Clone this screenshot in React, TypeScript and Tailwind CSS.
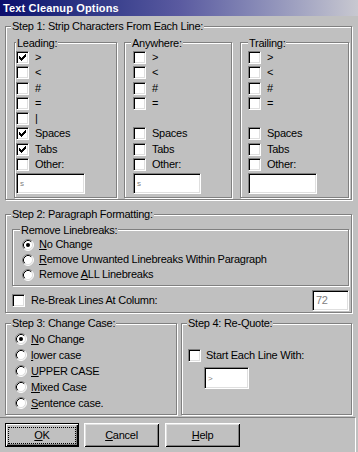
import React from 'react'

type Kids = { children?: React.ReactNode }

const sunken =
  'border border-t-[#808080] border-l-[#808080] border-b-white border-r-white shadow-[inset_1px_1px_0_#000,inset_-1px_-1px_0_#dfdfdf] bg-white'

const Check = ({ checked }: { checked?: boolean }) => (
  <span className={`relative block h-[13px] w-[13px] shrink-0 ${sunken}`}>
    {checked && (
      <svg
        className="absolute left-[2px] top-[2px]"
        width="7"
        height="7"
        viewBox="0 0 7 7"
        shapeRendering="crispEdges"
      >
        {[2, 3, 4, 3, 2, 1, 0].map((y, i) => (
          <rect key={i} x={i} y={y} width="1" height="3" fill="#000" />
        ))}
      </svg>
    )}
  </span>
)

const Radio = ({ checked, className = '' }: { checked?: boolean; className?: string }) => (
  <svg className={`shrink-0 ${className}`} width="12" height="12" viewBox="0 0 12 12">
    <circle cx="6" cy="6" r="5" fill="#fff" />
    <path d="M2.11 9.89 A5.5 5.5 0 0 1 9.89 2.11" fill="none" stroke="#808080" strokeWidth="1" />
    <path d="M9.89 2.11 A5.5 5.5 0 0 1 2.11 9.89" fill="none" stroke="#fff" strokeWidth="1" />
    <path d="M2.82 9.18 A4.5 4.5 0 0 1 9.18 2.82" fill="none" stroke="#000" strokeWidth="1" />
    <path d="M9.18 2.82 A4.5 4.5 0 0 1 2.82 9.18" fill="none" stroke="#dfdfdf" strokeWidth="1" />
    {checked && <circle cx="6" cy="6" r="2" fill="#000" />}
  </svg>
)

const Field = ({ className = '', children }: Kids & { className?: string }) => (
  <div className={`flex shrink-0 items-center pl-[3px] text-[#808080] ${sunken} ${className}`}>
    {children}
  </div>
)

const Group = ({
  label,
  legend,
  className = '',
  children,
}: Kids & { label: string; legend: string; className?: string }) => (
  <div
    className={`relative shrink-0 border border-[#808080] shadow-[inset_1px_1px_0_#fff,1px_1px_0_#fff] ${className}`}
  >
    <span className={`absolute whitespace-nowrap bg-[#c0c0c0] px-[1px] leading-[13px] ${legend}`}>
      {label}
    </span>
    {children}
  </div>
)

const Row = ({ checked, label, className = '' }: { checked?: boolean; label: string; className?: string }) => (
  <div className={`flex h-[15px] items-center gap-[6px] ${className}`}>
    <Check checked={checked} />
    <span>{label}</span>
  </div>
)

const Btn = ({ def, className = '', children }: Kids & { def?: boolean; className?: string }) => (
  <div
    className={`relative flex h-[24px] shrink-0 items-center justify-center bg-[#c0c0c0] ${
      def
        ? 'border border-black shadow-[inset_1px_1px_0_#fff,inset_-1px_-1px_0_#000,inset_-2px_-2px_0_#808080]'
        : 'shadow-[inset_1px_1px_0_#fff,inset_-1px_-1px_0_#000,inset_2px_2px_0_#dfdfdf,inset_-2px_-2px_0_#808080]'
    } ${className}`}
  >
    {def && <span className="absolute bottom-[2px] left-[2px] right-[2px] top-[3px] border border-dotted border-black" />}
    <span>{children}</span>
  </div>
)

type Item = { label: string; checked?: boolean; gap?: boolean }

const leading: Item[] = [
  { label: '>', checked: true },
  { label: '<' },
  { label: '#', gap: true },
  { label: '=' },
  { label: '|' },
  { label: 'Spaces', checked: true },
  { label: 'Tabs', checked: true, gap: true },
  { label: 'Other:' },
]

const others: Item[] = [
  { label: '>' },
  { label: '<' },
  { label: '#', gap: true },
  { label: '=' },
  { label: '' },
  { label: 'Spaces' },
  { label: 'Tabs', gap: true },
  { label: 'Other:' },
]

const rows = (items: Item[]) =>
  items.map((it, i) =>
    it.label === '' ? (
      <div key={i} className="h-[15px]" />
    ) : (
      <Row key={i} label={it.label} checked={it.checked} className={it.gap ? 'mt-[1px]' : ''} />
    ),
  )

export default function App() {
  return (
    <div className="flex h-[452px] w-[358px] flex-col overflow-hidden bg-[#c0c0c0] font-['Liberation_Sans',Arial,sans-serif] text-[11px] leading-[13px] tracking-[-0.25px] text-black">
      <div className="flex h-[16px] shrink-0 items-center bg-gradient-to-r from-[#0c0c6c] via-[#5a5aa0] to-[#c8c8d0] pl-[3px] font-bold tracking-[0.15px] text-white">
        Text Cleanup Options
      </div>

      {/* step 1 */}
      <Group
        label="Step 1: Strip Characters From Each Line:"
        legend="left-[5px] top-[-7px]"
        className="ml-[5px] mt-[10px] flex h-[174px] w-[347px] pl-[8px] pt-[15px]"
      >
        <Group label="Leading:" legend="left-[1px] top-[-6px]" className="h-[156px] w-[103px] pl-[1px] pt-[7px]">
          {rows(leading)}
          <Field className="mt-[1px] h-[21px] w-[69px] text-[8px]">s</Field>
        </Group>
        <Group label="Anywhere:" legend="left-[6px] top-[-6px]" className="ml-[7px] h-[156px] w-[108px] pl-[8px] pt-[7px]">
          {rows(others)}
          <Field className="mt-[1px] h-[21px] w-[68px] text-[8px]">s</Field>
        </Group>
        <Group label="Trailing:" legend="left-[7px] top-[-6px]" className="ml-[8px] h-[156px] w-[109px] pl-[7px] pt-[7px]">
          {rows(others)}
          <Field className="mt-[1px] h-[21px] w-[69px]" />
        </Group>
      </Group>

      {/* step 2 */}
      <Group
        label="Step 2: Paragraph Formatting:"
        legend="left-[5px] top-[-7px]"
        className="ml-[5px] mt-[14px] h-[99px] w-[347px] pl-[6px] pt-[14px]"
      >
        <Group label="Remove Linebreaks:" legend="left-[7px] top-[-6px]" className="h-[57px] w-[337px] pl-[9px] pt-[8px]">
          <div className="flex h-[15px] items-start gap-[5px]">
            <Radio checked className="mt-[1px]" />
            <span>
              <u>N</u>o Change
            </span>
          </div>
          <div className="flex h-[15px] items-start gap-[5px]">
            <Radio className="mt-[1px]" />
            <span>
              <u>R</u>emove Unwanted Linebreaks Within Paragraph
            </span>
          </div>
          <div className="flex h-[15px] items-start gap-[5px]">
            <Radio className="mt-[1px]" />
            <span>
              Remove <u>A</u>LL Linebreaks
            </span>
          </div>
        </Group>
        <div className="mt-[4px] flex h-[21px] items-center">
          <Check />
          <span className="ml-[6px]">Re-Break Lines At Column:</span>
          <Field className="ml-auto mr-[2px] h-[21px] w-[37px]">72</Field>
        </div>
      </Group>

      {/* step 3 + 4 */}
      <div className="mt-[10px] flex shrink-0">
        <Group label="Step 3: Change Case:" legend="left-[5px] top-[-7px]" className="ml-[5px] h-[92px] w-[172px] pl-[9px] pt-[7px]">
          {[
            <>
              <u>N</u>o Change
            </>,
            <>
              <u>l</u>ower case
            </>,
            <>
              <u>U</u>PPER CASE
            </>,
            <>
              <u>M</u>ixed Case
            </>,
            <>
              <u>S</u>entence case.
            </>,
          ].map((t, i) => (
            <div key={i} className="flex h-[16px] items-center gap-[4px]">
              <Radio checked={i === 0} />
              <span>{t}</span>
            </div>
          ))}
        </Group>
        <Group label="Step 4: Re-Quote:" legend="left-[5px] top-[-7px]" className="ml-[4px] h-[92px] w-[171px] pl-[6px] pt-[24px]">
          <div className="flex h-[15px] items-center gap-[5px]">
            <Check />
            <span>Start Each Line With:</span>
          </div>
          <Field className="ml-[16px] mt-[4px] h-[22px] w-[45px] text-[8px]">&gt;</Field>
        </Group>
      </div>

      {/* buttons */}
      <div className="mt-[2px] flex w-[356px] flex-1 border-r border-t border-r-white border-t-[#808080] pl-[5px] pt-[5px]">
        <Btn def className="w-[74px]">
          <u>O</u>K
        </Btn>
        <Btn className="ml-[5px] w-[75px]">
          <u>C</u>ancel
        </Btn>
        <Btn className="ml-[6px] w-[75px]">
          <u>H</u>elp
        </Btn>
      </div>
    </div>
  )
}
